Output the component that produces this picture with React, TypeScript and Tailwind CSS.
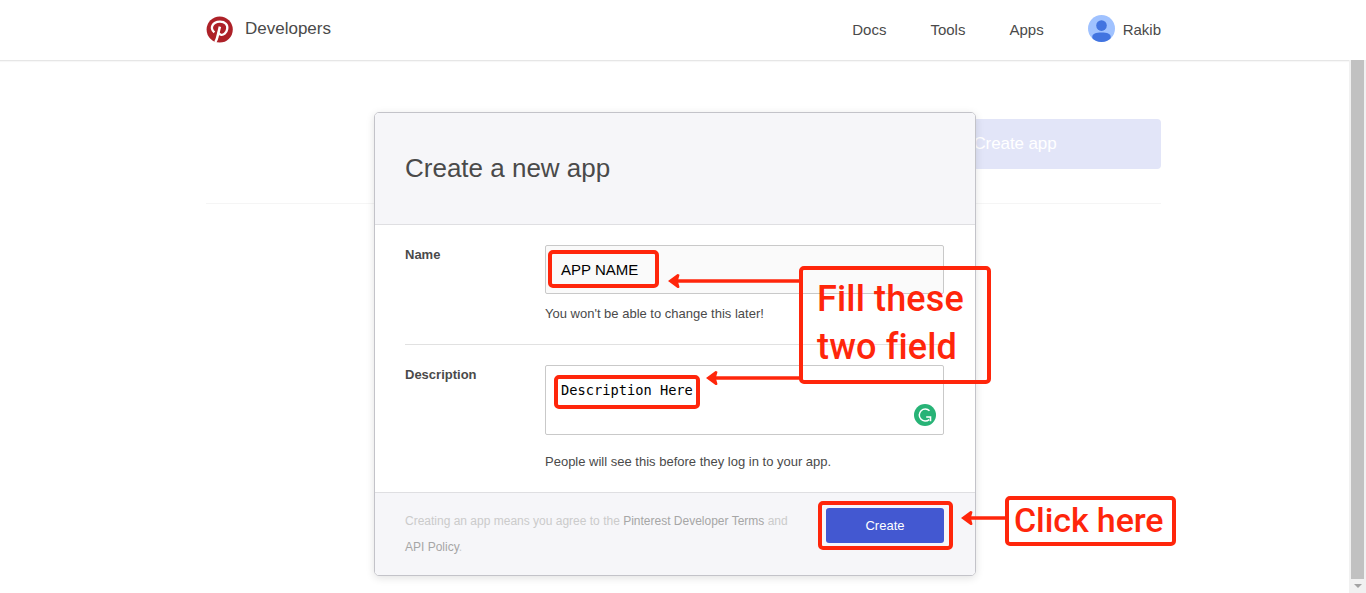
import React from "react";

function PinLogo() {
  return (
    <svg viewBox="0 0 27 27" className="-mt-0.5 size-[27px]" fill="none" stroke="white">
      <circle cx="13.7" cy="13.5" r="13.1" fill="#ad2128" stroke="none" />
      <path d="M8.4 16.3C3.4 12.2 6.4 5.8 13.8 5.6C19.2 5.5 22 8.8 21.2 13C20.5 17.2 17.4 19.4 14.7 18.7C13.3 18.3 12.6 17.3 12.5 16.5" strokeWidth="2.3" />
      <path d="M13.9 10.6L11.2 21.6Q10.7 24 9.3 26.2" strokeWidth="2.5" />
    </svg>
  );
}

function Header() {
  return (
    <header className="h-[61px] border-b border-[#e6e6e6] bg-white shadow-[0_1px_1px_rgba(0,0,0,0.03)]">
      <div className="ml-[206px] flex h-[60px] w-[955px] items-center text-[#4a4a4a]">
        <PinLogo />
        <span className="-mt-[3px] ml-3 w-[86px] text-[17px] leading-6">Developers</span>
        <nav className="ml-auto flex items-center text-[15px] leading-6">
          <a className="mr-11">Docs</a>
          <a className="mr-11">Tools</a>
          <a className="mr-11">Apps</a>
          <a className="flex items-center gap-2">
            <svg viewBox="0 0 27 27" className="-mt-[3px] size-[27px]">
              <clipPath id="avatar"><circle cx="13.5" cy="13.5" r="13.5" /></clipPath>
              <g clipPath="url(#avatar)">
                <rect width="27" height="27" fill="#a0c2ff" />
                <circle cx="13.5" cy="10.6" r="5.3" fill="#4274e0" />
                <path d="M4.3 27v-5.2c0-2.8 3.4-4.2 9.2-4.2s9.2 1.4 9.2 4.2V27z" fill="#4274e0" />
              </g>
            </svg>
            <span>Rakib</span>
          </a>
        </nav>
      </div>
    </header>
  );
}

function ScrollBar() {
  return (
    <div className="flex w-[17px] flex-col items-center bg-[#f1f1f1]">
      <div className="w-[13px] flex-1 bg-[#c1c1c1]" />
      <div className="flex h-[14px] items-center">
        <svg viewBox="0 0 8 4" className="h-1 w-2"><path d="M0 0h8L4 4z" fill="#a3a3a3" /></svg>
      </div>
    </div>
  );
}

function CreateDialog() {
  return (
    <section className="absolute top-[112px] left-[374px] flex h-[464px] w-[602px] flex-col overflow-hidden rounded-[5px] border border-[#c3c3c9] bg-white text-[13px] text-[#4a4a4a] shadow-[0_2px_8px_rgba(0,0,0,0.12)]">
      <div className="flex h-[112px] items-center border-b border-[#dfdfe2] bg-[#f6f6f9] px-[30px] pb-0.5">
        <h1 className="text-[26px] leading-8">Create a new app</h1>
      </div>
      <div className="h-[267px] px-[30px] pt-5">
        <div className="flex h-[100px] border-b border-[#e1e1e1]">
          <label className="w-[140px] leading-5 font-bold">Name</label>
          <div>
            <div className="flex h-[49px] w-[399px] items-center rounded-[2px] border border-[#c9c9c9] bg-[#fafafa] px-[15px] pt-0.5 text-[15px] text-black">APP NAME</div>
            <p className="mt-[10px] leading-5">You won't be able to change this later!</p>
          </div>
        </div>
        <div className="flex pt-5">
          <label className="w-[140px] leading-5 font-bold">Description</label>
          <div>
            <div className="flex h-[70px] w-[399px] items-end justify-between rounded-[2px] border border-[#c9c9c9] pt-[15px] pr-[7.5px] pb-2 pl-[15px]">
              <span className="self-start font-['DejaVu_Sans_Mono',monospace] text-[13.7px] leading-[18px] text-black">Description Here</span>
              <svg viewBox="0 0 22 22" className="size-[22px]">
                <circle cx="11" cy="11" r="11" fill="#27b376" />
                <path d="M15.5 6.8A6 6 0 1 0 15.2 15.6" fill="none" stroke="white" strokeWidth="1.5" />
                <path d="M12.2 13h4.3v4.2" fill="none" stroke="white" strokeWidth="1.6" />
              </svg>
            </div>
            <p className="mt-[17px] leading-5">People will see this before they log in to your app.</p>
          </div>
        </div>
      </div>
      <div className="flex flex-1 justify-between border-t border-[#dfdfe2] bg-[#f6f6f9] pt-[15px] pr-[31px] pl-[30px]">
        <p className="w-[400px] text-[12px] leading-[26px] text-[#cbcbcb]">
          Creating an app means you agree to the <a className="text-[#a6a6a6]">Pinterest Developer Terms</a> and<br />
          <a className="text-[#a6a6a6]">API Policy</a>.
        </p>
        <button className="h-[35px] w-[118px] rounded-[3px] bg-[#4358d1] text-[13px] text-white">Create</button>
      </div>
    </section>
  );
}

function Arrow({ className, length }: { className: string; length: number }) {
  return (
    <svg className={className} width={length} height="16" viewBox={`0 0 ${length} 16`}>
      <path d={`M8 8H${length}`} stroke="#ff260b" strokeWidth="3.4" />
      <path d="M0 8L9.5 0.9Q11.9 1 11.3 2.8L9.8 8L11.3 13.2Q11.9 15 9.5 15.1Z" fill="#ff260b" />
    </svg>
  );
}

function Annotations() {
  return (
    <>
      <div className="absolute top-[250px] left-[548px] h-[38px] w-[111px] rounded-[5px] border-4 border-[#ff260b]" />
      <div className="absolute top-[375px] left-[554px] h-[34px] w-[146px] rounded-[5px] border-4 border-[#ff260b]" />
      <div className="absolute top-[501px] left-[818px] h-[49px] w-[135px] rounded-[5px] border-4 border-[#ff260b]" />
      <Arrow className="absolute top-[273px] left-[667.5px]" length={133} />
      <Arrow className="absolute top-[370px] left-[705.5px]" length={95} />
      <Arrow className="absolute top-[510px] left-[960.5px]" length={46} />
      <div className="absolute top-[266px] left-[799px] h-[118px] w-[192px] rounded-[5px] border-4 border-[#ff260b] pt-[5px] pl-[14px] font-[Roboto,sans-serif] text-[36px] leading-[48px] font-medium tracking-[0.15px] whitespace-nowrap text-[#ff260b]">
        Fill these<br />two field
      </div>
      <div className="absolute top-[496px] left-[1005px] h-[50px] w-[171px] rounded-[5px] border-4 border-[#ff260b] pl-[5px] font-[Roboto,sans-serif] text-[34px] leading-[40px] font-medium tracking-[-0.1px] whitespace-nowrap text-[#ff260b]">
        Click here
      </div>
    </>
  );
}

export default function App() {
  return (
    <div className="relative flex h-[593px] w-[1366px] flex-col overflow-hidden bg-white font-['Liberation_Sans',Arial,sans-serif]">
      <Header />
      <div className="-mt-px flex flex-1">
        <main className="flex-1 pt-[59px] pl-[206px]">
          <div className="flex h-[85px] w-[955px] justify-end border-b border-[#f5f5f5]">
            <div className="flex h-[50px] w-[290px] items-center justify-center rounded-[4px] bg-[#e2e5f8] pr-0.5 text-[17px] tracking-[-0.1px] text-white">Create app</div>
          </div>
        </main>
        <ScrollBar />
      </div>
      <CreateDialog />
      <Annotations />
    </div>
  );
}
